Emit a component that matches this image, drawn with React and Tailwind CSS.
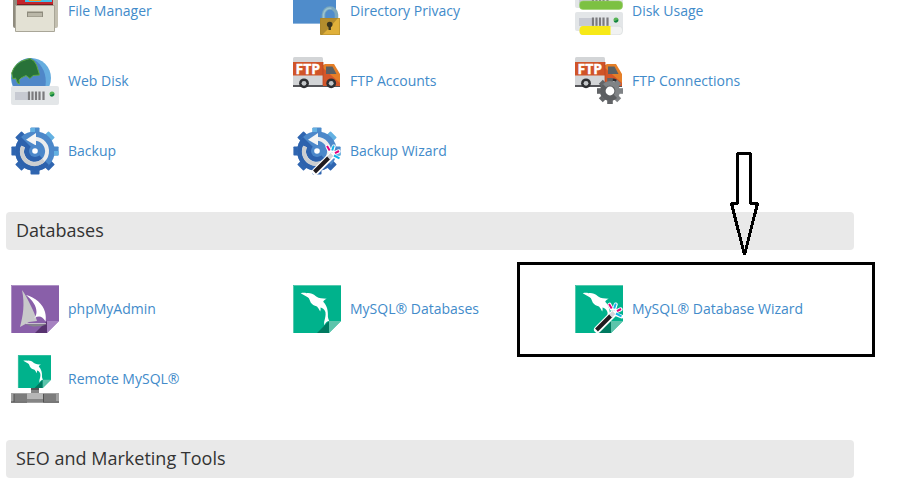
const iconClass = "block size-12 shrink-0";

function Icon({ children }) {
  return (
    <svg className={iconClass} viewBox="0 0 48 48" aria-hidden="true">
      {children}
    </svg>
  );
}

const GEAR_ANGLES = [0, 45, 90, 135, 180, 225, 270, 315];

function FileManagerIcon() {
  return (
    <Icon>
      <path d="M2 0h14v41H4q-2 0-2-2z" fill="#8f8b7e" />
      <path d="M16 0h31v39q0 2-2 2H16z" fill="#c3bfb0" />
      <path d="M6 4h36v14H6z" fill="#c4252c" />
      <path d="M14 6h27v9H14z" fill="#44bde8" />
      <path d="M16 4h17l-3 10H18z" fill="#f59a23" />
      <path d="M6 17.500h36" stroke="#7c1c20" />
      <path d="M4.500 18.500h39v26h-39z" fill="#e3e1d4" stroke="#a9a698" />
      <path d="M16 24.500h16v5.500H16z" fill="#8e8b7d" />
      <path d="M17 26h14v3.500H17z" fill="#bab7a8" />
    </Icon>
  );
}

function DirectoryPrivacyIcon() {
  return (
    <Icon>
      <path d="M0 5h43v32H0z" fill="#4f8ccb" />
      <path d="M0 36.500h43" stroke="#8fb6de" />
      <path d="M30.500 32v-4.500a6.500 6.500 0 0 1 13 0V32" fill="none" stroke="#7ba8bd" strokeWidth="3.500" />
      <path d="M30.500 32v-4.500a6.500 6.500 0 0 1 8-6" fill="none" stroke="#9cc4cf" strokeWidth="1.500" />
      <rect x="27" y="31" width="20" height="17" rx="1" fill="#b38c2d" />
      <path d="M47 31v17H29l9-9 7-8z" fill="#e0b03a" />
      <path d="M27.500 31.500h19v16h-19z" fill="none" stroke="#a07d28" strokeOpacity=".4" />
      <circle cx="36.700" cy="37.500" r="2.800" fill="#39341f" />
      <path d="M35.500 38h2.400v5h-2.400z" fill="#39341f" />
    </Icon>
  );
}

function ServerFace({ y }) {
  return (
    <g transform={`translate(0 ${y})`}>
      <rect width="48" height="19" rx="2" fill="#e3e6e8" />
      <path d="M4 6h13v8H4z" fill="#c7cad2" />
      <path d="M18 5.500v8.500M21.500 5.500v8.500M25 5.500v8.500M28.500 5.500v8.500M32.500 5.500v8.500" stroke="#7b7b7e" strokeWidth="2.200" />
      <circle cx="41" cy="8" r="2.500" fill="#55b455" />
      <path d="M38.800 9.500a2.500 2.500 0 0 0 4.400-2z" fill="#0d7d45" />
    </g>
  );
}

function DiskUsageIcon() {
  return (
    <Icon>
      <ServerFace y={2} />
      <rect x="4.500" y="14" width="43" height="8.500" rx="3.500" fill="#7cc142" stroke="#98cf68" strokeWidth=".6" />
      <ServerFace y={25} />
      <rect x="4.500" y="39.200" width="43" height="8.500" rx="3.500" fill="#f1f2f2" stroke="#d5d8da" strokeWidth=".6" />
      <path d="M35.500 39v9H8q-3.500 0-3.500-4.500T8 39z" fill="#f7e917" />
    </Icon>
  );
}

function WebDiskIcon() {
  return (
    <Icon>
      <circle cx="20" cy="21" r="20" fill="#66addf" />
      <path d="M20 1C31 6 37 17 34 32H4A20 20 0 0 1 20 1z" fill="#4f87c8" />
      <path
        d="M15.500 2.500l3.500-1 4 2.500 2.500 4 2.500 8 0.500 2-6.500.500-3 3-4-3-5 2.500-2 2 .5 4-2-1-2-5-2.500 1L.700 16A20 20 0 0 1 15.500 2.500z"
        fill="#287239"
        stroke="#5fa943"
        strokeWidth="1"
      />
      <ServerFace y={29} />
    </Icon>
  );
}

function Truck() {
  return (
    <g>
      <path d="M0 27h47v3H0z" fill="#55565a" />
      <path d="M1.500 0h27Q30 0 30 1.500V28H0V1.500Q0 0 1.500 0z" fill="#d3d5d7" />
      <path d="M0 5h30v13.500H0z" fill="#d05428" />
      <path d="M30 8l2-1h9l6 10v12H30z" fill="#e57f28" />
      <path d="M30 11l17 15v3H30z" fill="#d4572a" />
      <path d="M33 9.500h6.500l4 7.500H33z" fill="#5a6064" />
      <path d="M30 5v23" stroke="#b84824" strokeWidth=".8" />
      <circle cx="11" cy="26.300" r="4.900" fill="#2e2f32" />
      <circle cx="11" cy="26.300" r="2.400" fill="#c4c7c9" />
      <circle cx="38.200" cy="26.300" r="4.900" fill="#2e2f32" />
      <circle cx="38.200" cy="26.300" r="2.400" fill="#c4c7c9" />
      <text
        x="2.500"
        y="16.500"
        fill="#fff"
        stroke="#fff"
        strokeWidth=".4"
        fontSize="14"
        className="font-['Open_Sans',sans-serif] font-bold"
      >
        FTP
      </text>
    </g>
  );
}

function FtpAccountsIcon() {
  return (
    <Icon>
      <Truck />
    </Icon>
  );
}

function FtpConnectionsIcon() {
  return (
    <Icon>
      <Truck />
      <g transform="translate(35 34)">
        {GEAR_ANGLES.map((angle) => (
          <path
            key={angle}
            d="M-2.800-13h5.600v6h-5.600z"
            fill={angle > 0 && angle < 180 ? "#7f8285" : "#626467"}
            transform={`rotate(${angle})`}
          />
        ))}
        <circle r="10" fill="#808386" />
        <path d="M-7.100-7.100A10 10 0 0 0 7.100 7.100z" fill="#5c5e61" />
        <circle r="5.400" fill="#5c5e61" />
        <circle r="4.400" fill="#fff" />
      </g>
    </Icon>
  );
}

function BackupArt() {
  return (
    <g>
      <g transform="translate(24 24)">
        {GEAR_ANGLES.map((angle) => (
          <path
            key={angle}
            d="M-4.500-18v-4.800q0-.8.800-.8h7.400q.8 0 .8.800v4.800z"
            fill={angle >= 135 && angle <= 315 ? "#2f65b0" : angle % 90 ? "#63b1e2" : "#4b8bcc"}
            transform={`rotate(${angle})`}
          />
        ))}
        <circle r="19.800" fill="#4c88ca" />
        <path d="M-14-14A19.800 19.800 0 1 0 14 14z" fill="#2d62ad" />
        <path d="M-4.500-23h4.500v4h-4.500zM19 0h4.500v4.500H19z" fill="#63b1e2" />
      </g>
      <path d="M12 19.500A12.500 12.500 0 1 0 24 11.800" fill="none" stroke="#eceded" strokeWidth="4" />
      <path d="M12 19.500A12.500 12.500 0 0 0 32.500 33.200" fill="none" stroke="#ccced0" strokeWidth="4" />
      <path d="M15 12.700l10-6.700v12.500z" fill="#f4f5f5" />
      <circle cx="24" cy="24" r="6" fill="#4c88ca" />
      <circle cx="24" cy="24" r="2.800" fill="#fff" />
    </g>
  );
}

function Wand() {
  return (
    <g fill="none">
      <path d="M22.500 44.500L38 29" stroke="#fff" strokeWidth="7" strokeLinecap="round" />
      <path
        d="M34.500 19.700l2 4M40.700 19.500l-1.400 4.300M42 26l3.600-1.600M41.500 29.500l5 2"
        stroke="#fff"
        strokeWidth="4"
        strokeLinecap="round"
      />
      <path d="M21.500 45L36 30.500" stroke="#211b1f" strokeWidth="4" />
      <path d="M35.500 31L39 27.500" stroke="#d2d4d8" strokeWidth="4" />
      <path d="M34 19l2.700 4.500M42 26.200l4-2.200" stroke="#e5007e" strokeWidth="2" />
      <path d="M40.800 18.500l-1.600 5M41 28.500l5.500 2.800" stroke="#12b2e8" strokeWidth="2" />
    </g>
  );
}

function BackupIcon() {
  return (
    <Icon>
      <BackupArt />
    </Icon>
  );
}

function BackupWizardIcon() {
  return (
    <Icon>
      <BackupArt />
      <Wand />
    </Icon>
  );
}

function Fold({ shade, light }) {
  return (
    <g>
      <path d="M24 48l12-12v12z" fill={shade} />
      <path d="M36 36h12L36 48z" fill={light} />
    </g>
  );
}

function PhpMyAdminIcon() {
  return (
    <Icon>
      <path d="M0 0h48v36L36 48H0z" fill="#895fa9" />
      <path d="M.5 48V.5H48" fill="none" stroke="#ae91c5" />
      <Fold shade="#57326f" light="#a682c1" />
      <path d="M11 5c3 4 5 8 7 12 3 6 5 10 7 16l1 3-8 1-9 5c3-11 5-23 2-37z" fill="#c8c9ca" />
      <path d="M15 10c9 2 17 9 19 17 1 4 1 7 .5 9.500-2-3.500-4-5-6.500-5-3 0-4.500 1.500-6.500 3.500 3-3 4-5 4-8 0-6-4-12-10.500-17z" fill="#fff" />
      <path d="M14 39.300h22c-4 1.500-9 2.400-14 2.200z" fill="#85878a" />
      <path d="M15 38.500h20" stroke="#d9d9db" strokeWidth=".8" />
    </Icon>
  );
}

function MysqlArt() {
  return (
    <g>
      <path d="M0 0h48v36L36 48H0z" fill="#00b28c" />
      <path d="M.5 48V.5H48" fill="none" stroke="#55c9ae" />
      <Fold shade="#007a60" light="#5cc4ab" />
      <path
        d="M7.700 8.200c2-.5 4-.5 6 0 3-.4 6 .4 9.500 3.300 3 2 6 2 10.500 2.200-1.500.5-3 1.500-3.500 3 4 4 5 9 4.700 15 .2 2 1 3 1.300 4.300-2 0-3.500 1.300-4.700 4.200-.6-2-.5-3.500.2-5.500 1-3.500 1.300-7 .3-8.700-1-2-2.500-3-4.500-3.500.3 1.200.2 2.500-.3 4-1-2-2-3.500-3.200-5-3-.8-5-2-6.300-4-1-1.700-1-4-3-5.200z"
        fill="#fff"
      />
    </g>
  );
}

function MysqlIcon() {
  return (
    <Icon>
      <MysqlArt />
    </Icon>
  );
}

function MysqlWizardIcon() {
  return (
    <Icon>
      <MysqlArt />
      <Wand />
    </Icon>
  );
}

function RemoteMysqlIcon() {
  return (
    <Icon>
      <path d="M20 32h8v7h-8z" fill="#858585" />
      <path d="M20 33h8v2h-8z" fill="#555" />
      <g transform="translate(7 0) scale(.6875)">
        <MysqlArt />
      </g>
      <path d="M0 38h48v10H0z" fill="#a1a1a1" />
      <path d="M3 39h13v7H3zM32 39h13v7H32z" fill="#7c7c7c" />
      <path d="M16 38h16v6H16z" fill="#b6b6b6" />
      <path d="M16 44h16v3H16z" fill="#858585" />
      <path d="M0 46h16v2H0zM32 46h16v2H32z" fill="#777" />
      <path d="M3 39v8M32.500 39v8" stroke="#505050" />
    </Icon>
  );
}

function Tool({ icon: ToolIcon, label, children }) {
  return (
    <li className="relative py-[11px] pl-[5px]">
      <a href="#" className="flex items-center gap-[9px] text-sm whitespace-nowrap text-[#428bca]">
        <ToolIcon />
        <span>{label}</span>
      </a>
      {children}
    </li>
  );
}

function ToolGrid({ children }) {
  return <ul className="grid grid-cols-3 pr-0.5">{children}</ul>;
}

function SectionHeading({ children }) {
  return (
    <h2 className="rounded bg-[#e9e9e9] px-2.5 pt-1 pb-1.5 text-lg leading-7 text-[#333]">{children}</h2>
  );
}

function Callout() {
  return (
    <div className="pointer-events-none absolute -top-3 left-[-53px] h-[95px] w-[358px] border-3 border-black">
      <svg
        className="absolute top-[-113px] left-[210px] h-[105px] w-[30px]"
        viewBox="0 0 30 105"
        aria-hidden="true"
      >
        <path
          d="M7.500 1.500h13v50h7L14.500 103 1.500 51.500h6z"
          fill="none"
          stroke="#000"
          strokeWidth="3"
          strokeLinejoin="bevel"
          shapeRendering="crispEdges"
        />
      </svg>
    </div>
  );
}

export default function App() {
  return (
    <div className="overflow-hidden bg-white font-['Open_Sans',sans-serif]">
      <main className="-mt-6 mr-[63px] ml-1.5 pb-5">
        <section className="mb-[26px]" aria-label="Files">
          <ToolGrid>
            <Tool icon={FileManagerIcon} label="File Manager" />
            <Tool icon={DirectoryPrivacyIcon} label="Directory Privacy" />
            <Tool icon={DiskUsageIcon} label="Disk Usage" />
            <Tool icon={WebDiskIcon} label="Web Disk" />
            <Tool icon={FtpAccountsIcon} label="FTP Accounts" />
            <Tool icon={FtpConnectionsIcon} label="FTP Connections" />
            <Tool icon={BackupIcon} label="Backup" />
            <Tool icon={BackupWizardIcon} label="Backup Wizard" />
          </ToolGrid>
        </section>
        <section className="mb-[26px] flex flex-col gap-6">
          <SectionHeading>Databases</SectionHeading>
          <ToolGrid>
            <Tool icon={PhpMyAdminIcon} label="phpMyAdmin" />
            <Tool icon={MysqlIcon} label="MySQL® Databases" />
            <Tool icon={MysqlWizardIcon} label="MySQL® Database Wizard">
              <Callout />
            </Tool>
            <Tool icon={RemoteMysqlIcon} label="Remote MySQL®" />
          </ToolGrid>
        </section>
        <section>
          <SectionHeading>SEO and Marketing Tools</SectionHeading>
        </section>
      </main>
    </div>
  );
}
